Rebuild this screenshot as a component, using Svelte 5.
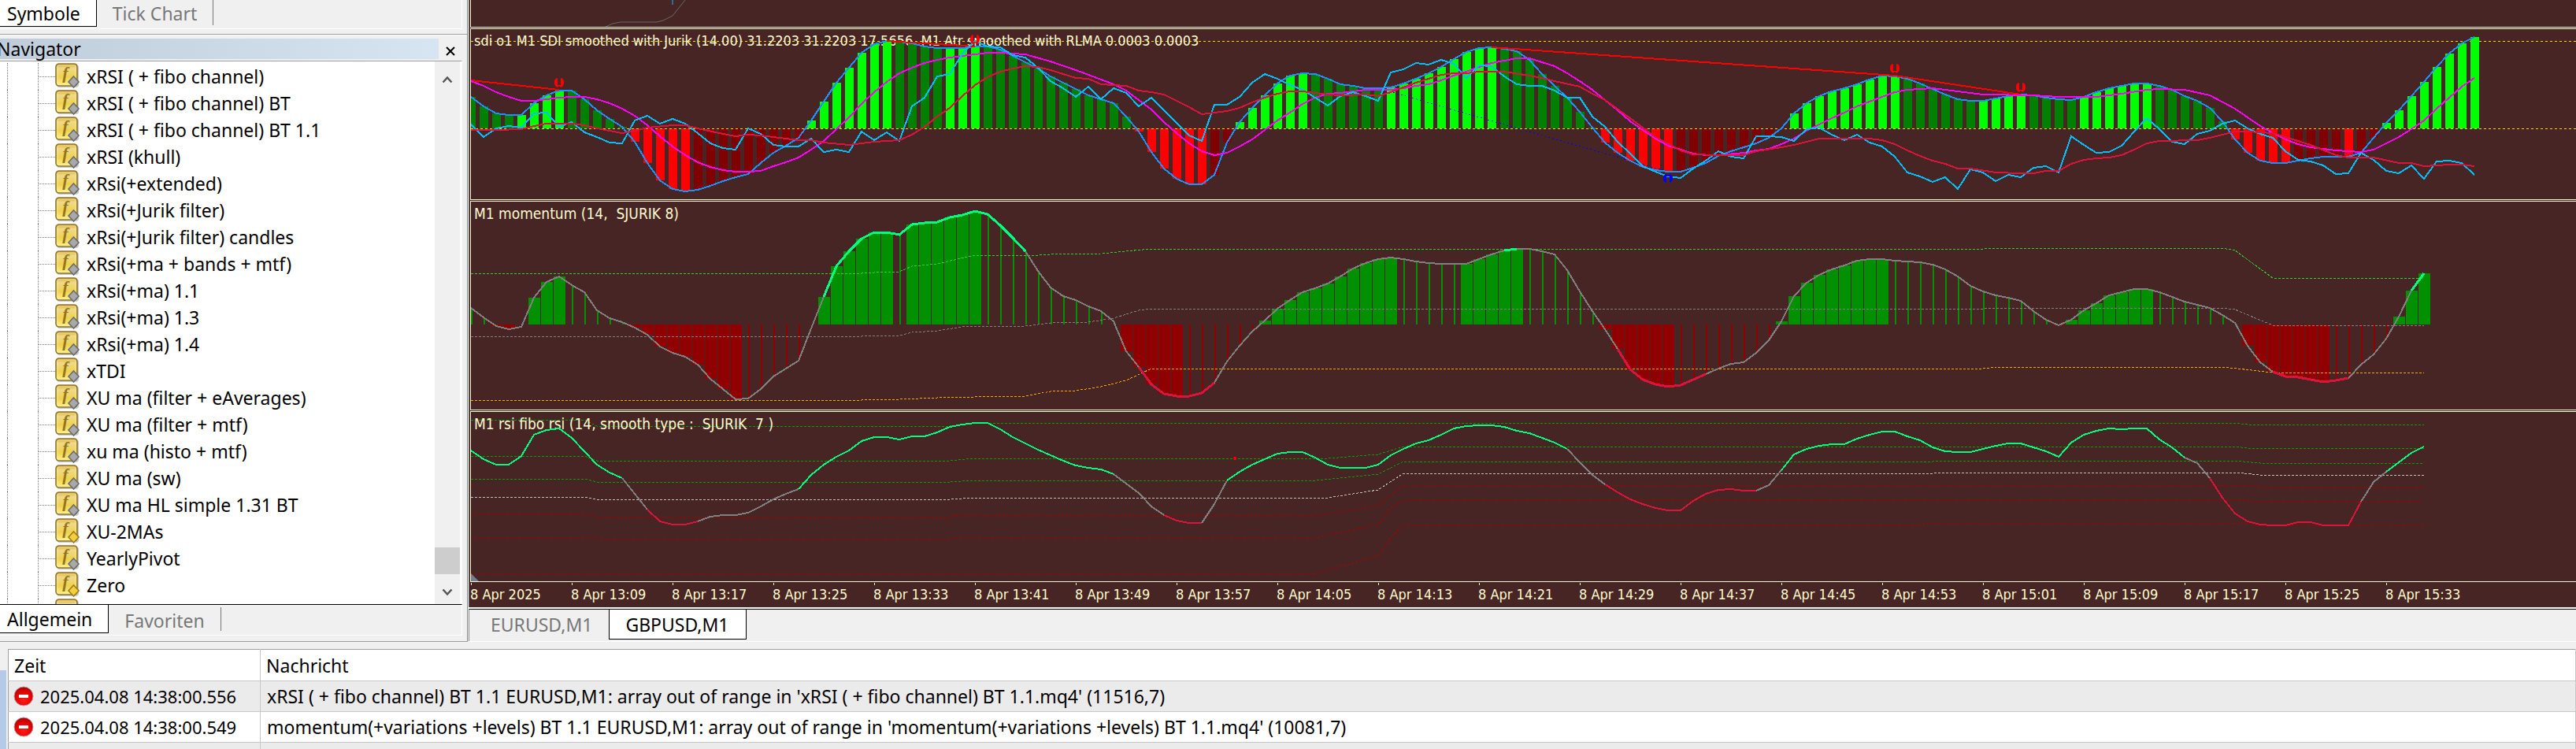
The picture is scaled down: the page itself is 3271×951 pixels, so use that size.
<script>
  const indicators = [
    'xRSI ( + fibo channel)',
    'xRSI ( + fibo channel) BT',
    'xRSI ( + fibo channel) BT 1.1',
    'xRSI (khull)',
    'xRsi(+extended)',
    'xRsi(+Jurik filter)',
    'xRsi(+Jurik filter) candles',
    'xRsi(+ma + bands + mtf)',
    'xRsi(+ma) 1.1',
    'xRsi(+ma) 1.3',
    'xRsi(+ma) 1.4',
    'xTDI',
    'XU ma (filter + eAverages)',
    'XU ma (filter + mtf)',
    'xu ma (histo + mtf)',
    'XU ma (sw)',
    'XU ma HL simple 1.31 BT',
    'XU-2MAs',
    'YearlyPivot',
    'Zero',
    ''
  ];
  const compiledOnly = ['XU-2MAs', 'Zero'];

  const messages = [
    { time: '2025.04.08 14:38:00.556', text: "xRSI ( + fibo channel) BT 1.1 EURUSD,M1: array out of range in 'xRSI ( + fibo channel) BT 1.1.mq4' (11516,7)" },
    { time: '2025.04.08 14:38:00.549', text: "momentum(+variations +levels) BT 1.1 EURUSD,M1: array out of range in 'momentum(+variations +levels) BT 1.1.mq4' (10081,7)" }
  ];

  const times = ['2025', '13:09', '13:17', '13:25', '13:33', '13:41', '13:49', '13:57', '14:05', '14:13', '14:21', '14:29', '14:37', '14:45', '14:53', '15:01', '15:09', '15:17', '15:25', '15:33'];

  // distance between two candles
  const STEP = 16;

  // full series: one value for each candle
  const line = (ys, from = 0, to = ys.length - 1) =>
    ys.slice(from, to + 1).map((y, i) => `${(from + i) * STEP},${y}`).join(' ');

  // sparse series: "candle,value" pairs
  const path = (s) =>
    s.split(' ').map((p) => p.split(',')).map(([k, y]) => `${k * STEP},${y}`).join(' ');

  const inside = (k, ranges) => ranges.some(([a, b]) => k >= a && k <= b);

  // --- SDI ---
  const sdi = [
    123, 135, 144, 146, 146, 131, 121, 115, 115, 126, 140, 151, 161, 180, 207, 229, 240, 243, 241, 236,
    230, 225, 221, 207, 194, 185, 175, 153, 129, 105, 86, 67, 56, 52, 53, 55, 59, 61, 61, 61,
    59, 59, 63, 71, 79, 87, 97, 105, 113, 121, 126, 131, 148, 167, 193, 214, 227, 234, 234, 222,
    181, 155, 137, 121, 106, 96, 93, 94, 100, 107, 109, 112, 112, 111, 106, 100, 93, 85, 75, 66,
    61, 60, 62, 65, 76, 94, 109, 124, 142, 162, 181, 194, 204, 212, 216, 218, 218, 213, 207, 198,
    192, 187, 182, 175, 163, 144, 131, 122, 116, 112, 107, 101, 96, 97, 100, 106, 113, 120, 126, 128,
    128, 125, 122, 120, 121, 124, 126, 127, 123, 117, 112, 109, 106, 106, 109, 114, 122, 128, 137, 154,
    177, 194, 204, 207, 207, 204, 201, 199, 199, 199, 194, 175, 156, 140, 122, 104, 85, 68, 55, 47
  ];
  const atr = [
    158, 174, 163, 160, 162, 144, 143, 161, 155, 168, 174, 181, 182, 153, 147, 157, 151, 157, 169, 182,
    188, 190, 163, 170, 184, 186, 186, 176, 193, 190, 193, 167, 178, 168, 179, 135, 124, 97, 94, 68,
    52, 59, 60, 70, 73, 86, 103, 112, 123, 110, 126, 112, 118, 135, 124, 140, 156, 172, 179, 133,
    133, 123, 105, 94, 100, 108, 114, 124, 134, 122, 117, 122, 128, 92, 88, 80, 82, 76, 81, 99,
    83, 84, 97, 107, 109, 109, 115, 124, 124, 148, 161, 180, 195, 211, 218, 224, 226, 214, 204, 192,
    199, 201, 173, 173, 174, 179, 164, 162, 171, 178, 171, 181, 186, 199, 219, 224, 231, 225, 240, 215,
    219, 230, 222, 225, 213, 211, 219, 173, 184, 194, 193, 185, 167, 150, 164, 180, 183, 170, 166, 157,
    153, 163, 170, 175, 192, 203, 205, 210, 221, 220, 194, 203, 217, 220, 210, 227, 205, 204, 207, 222
  ];
  const signal = '0,103 1,109 2,117 3,123 4,128 5,128 6,126 7,124 8,123 9,123 10,126 11,131 12,138 13,147 14,159 15,173 16,186 17,197 18,206 19,212 20,216 21,218 22,218 23,217 24,211 25,206 26,200 27,190 28,179 29,164 30,149 31,132 32,117 33,104 34,93 35,86 36,80 37,76 38,73 39,71 40,69 41,67 42,67 43,68 44,69 46,78 48,89 50,101 51,107 52,115 53,127 54,139 55,155 56,169 57,182 58,192 59,197 60,194 61,186 62,177 63,165 64,153 65,143 66,132 67,124 68,119 69,118 70,116 71,114 73,114 74,112 75,109 76,107 77,102 78,96 79,91 80,85 81,80 82,77 83,74 84,74 85,79 86,84 87,93 88,103 89,114 90,127 91,140 92,154 93,165 94,176 95,185 96,190 97,195 98,197 99,197 101,194 102,191 103,189 104,183 105,176 106,166 107,158 108,150 109,143 110,135 111,129 112,123 113,117 114,114 116,112 118,116 120,120 124,121 126,123 129,123 131,119 133,114 134,113 136,114 138,121 140,138 141,149 142,160 143,169 144,177 145,183 146,187 148,191 150,193 151,190 152,182 153,174 154,164 155,153 156,138 157,124 158,110 159,99';
  const rlma = '0,165 2,165 4,164 5,160 6,157 8,157 9,159 10,163 11,166 12,169 13,166 14,162 16,159 17,159 18,163 20,170 21,173 22,171 23,172 24,174 26,178 27,178 28,181 30,184 32,180 34,178 35,171 36,161 37,148 38,137 39,122 40,108 41,98 42,91 43,87 44,84 45,85 46,89 48,99 49,100 50,107 52,109 53,115 54,117 55,120 56,128 57,136 58,145 59,143 60,141 61,137 62,130 63,124 64,119 65,116 66,116 67,118 68,120 69,121 71,120 72,122 73,117 75,105 77,95 78,93 79,93 80,91 82,91 84,96 85,99 86,103 88,110 89,119 90,127 92,150 94,174 96,191 97,196 99,197 101,197 102,192 104,187 105,184 107,176 111,176 112,178 113,183 114,191 115,198 116,204 117,208 118,214 119,214 121,219 123,220 124,220 125,217 126,217 127,208 128,203 129,201 130,200 131,197 132,190 133,182 134,179 137,178 138,175 140,167 141,167 143,169 144,174 146,184 148,197 149,200 151,200 153,207 154,207 155,211 157,209 158,209 159,211';
  const strong = [[4, 7], [13, 17], [27, 33], [38, 40], [53, 58], [61, 66], [73, 81], [90, 95], [105, 113], [120, 123], [128, 133], [140, 144], [149, 149], [152, 159]];
  const divergences = ['0,102 7,114', '33,52 40,59', '81,60 113,96 123,120'];
  const marks = [[7, 105], [40, 50], [113, 87], [123, 111]];

  function sdiColor(k, y) {
    if (y < 163) return inside(k, strong) ? '#00ff00' : '#008000';
    return inside(k, strong) ? '#ff0000' : '#800000';
  }

  // --- momentum ---
  const momentum = [
    391, 403, 414, 418, 415, 378, 358, 351, 362, 371, 394, 404, 409, 416, 425, 440, 448, 453, 463, 481,
    494, 507, 506, 494, 478, 468, 458, 417, 377, 338, 319, 303, 295, 295, 298, 285, 283, 282, 276, 273,
    268, 272, 286, 302, 319, 344, 365, 376, 381, 389, 395, 408, 446, 466, 488, 500, 503, 503, 499, 486,
    459, 439, 421, 407, 392, 381, 371, 366, 360, 351, 341, 334, 329, 327, 329, 332, 334, 335, 335, 335,
    329, 323, 318, 316, 316, 319, 323, 343, 370, 395, 418, 443, 469, 482, 488, 491, 489, 482, 475, 468,
    462, 460, 448, 432, 408, 376, 359, 349, 342, 337, 331, 329, 329, 331, 332, 333, 336, 342, 351, 363,
    370, 375, 378, 382, 395, 406, 413, 406, 394, 385, 375, 371, 367, 367, 371, 377, 383, 387, 391, 400,
    410, 439, 460, 472, 478, 479, 482, 485, 483, 480, 463, 450, 430, 402, 369, 347
  ];
  const wide = [[2, 3], [5, 7], [13, 21], [28, 33], [35, 40], [52, 56], [63, 73], [79, 83], [90, 95], [104, 112], [126, 133], [141, 147], [153, 155]];
  const momentumHot = [[28, 44, '#00ff7f'], [82, 83, '#00ff7f'], [154, 155, '#00ff7f'], [53, 59, '#dc143c'], [91, 98, '#dc143c'], [143, 149, '#dc143c']];
  const momentumLevels = [
    { color: '#32cd32', d: '0,347 31,347 32,346 34,345 35,338 37,335 40,324 45,324 46,323 50,322 52,319 54,316 120,316 121,315 139,315 140,318 143,353 155,353' },
    { color: '#808080', d: '0,427 31,427 32,426 34,426 35,422 37,420 39,415 44,414 46,410 49,409 51,404 53,394 54,392 120,392 121,391 139,391 140,393 143,413 155,413' },
    { color: '#ffa500', d: '0,508 31,508 32,507 34,507 37,505 40,504 44,503 46,497 48,496 50,491 52,483 54,468 120,468 121,466 139,466 143,473 155,473' }
  ];

  // --- rsi ---
  const rsi = [
    572, 583, 590, 590, 579, 552, 546, 544, 556, 573, 590, 600, 607, 627, 647, 662, 666, 666, 662, 656,
    654, 654, 651, 643, 634, 627, 621, 603, 590, 580, 572, 560, 555, 555, 558, 554, 554, 549, 542, 539,
    537, 537, 545, 555, 563, 571, 578, 585, 591, 594, 596, 602, 614, 626, 643, 654, 661, 664, 664, 640,
    610, 599, 590, 583, 576, 574, 574, 581, 590, 594, 594, 594, 590, 578, 570, 563, 559, 552, 544, 541,
    540, 540, 542, 547, 550, 556, 562, 570, 587, 603, 615, 625, 634, 640, 645, 648, 648, 636, 627, 622,
    621, 623, 623, 616, 597, 577, 570, 566, 564, 564, 557, 552, 548, 548, 554, 559, 568, 573, 574, 574,
    570, 566, 563, 563, 568, 573, 580, 562, 552, 547, 544, 545, 544, 544, 558, 568, 581, 588, 607, 632,
    652, 662, 666, 667, 667, 663, 663, 667, 667, 667, 637, 612, 599, 587, 575, 567
  ];
  const rsiParts = [
    [0, 12, '#00ff7f'], [12, 14, '#808080'], [14, 18, '#dc143c'], [18, 26, '#808080'], [26, 51, '#00ff7f'],
    [51, 55, '#808080'], [55, 58, '#dc143c'], [58, 60, '#808080'], [60, 87, '#00ff7f'], [87, 90, '#808080'],
    [90, 102, '#dc143c'], [102, 104, '#808080'], [104, 136, '#00ff7f'], [136, 138, '#808080'], [138, 150, '#dc143c'],
    [150, 152, '#808080'], [152, 155, '#00ff7f']
  ];
  const rsiLevels = [
    { color: '#00a000', d: '0,533 9,533 10,541 38,541 40,537 140,537 141,539 155,539' },
    { color: '#00a000', d: '0,579 9,579 10,585 38,585 40,582 68,582 72,577 74,567 140,567 141,569 155,569' },
    { color: '#00a000', d: '0,608 9,608 10,612 38,612 40,610 67,610 72,602 74,586 116,586 117,585 140,585 142,588 155,588' },
    { color: '#c0c0c0', d: '0,631 9,631 10,634 38,634 40,632 68,632 72,622 74,601 116,601 117,600 140,600 142,603 155,603' },
    { color: '#a00000', d: '0,653 9,653 10,656 38,656 40,655 67,655 72,642 74,616 140,616 142,618 155,618' },
    { color: '#a00000', d: '0,682 9,682 10,684 38,684 40,683 67,683 72,666 73,645 74,635 140,634 142,637 155,637' },
    { color: '#a00000', d: '0,728 67,728 72,706 73,683 74,666 115,666 116,664 140,664 142,667 155,667' }
  ];
</script>

<div class="terminal">
  <div class="workspace">
    <aside class="side">
      <div class="tabs market">
        <button class="tab active">Symbole</button>
        <button class="tab">Tick Chart</button>
      </div>

      <section class="navigator">
        <header>
          <h2>Navigator</h2>
          <button class="close" aria-label="Close">
            <svg width="12" height="12" viewBox="0 0 12 12"><path d="M1 1l10 10M11 1L1 11" stroke="#000" stroke-width="2" /></svg>
          </button>
        </header>
        <div class="body">
          <ul>
            {#each indicators as name}
              <li>
                <span class="guide first"></span>
                <span class="guide"></span>
                <span class="branch"></span>
                <svg class="icon" width="32" height="32" viewBox="0 0 32 32">
                  <rect x="2" y="2" width="28" height="29" rx="4" fill="#c9c9c9" />
                  <rect x="1" y="1" width="27" height="28" rx="4" fill="url(#gold)" stroke="#8c7434" stroke-width="1.6" />
                  <rect x="3" y="3" width="23" height="24" rx="2" fill="none" stroke="#fff3a0" stroke-opacity=".6" />
                  {#if name}
                    <text x="13" y="20" text-anchor="middle" class="fx">f</text>
                  {/if}
                  <path d="M23.500 17l6.500 7-6.500 7-6.500-7z" fill={compiledOnly.includes(name) ? '#f3cf45' : '#a9a9a9'} stroke={compiledOnly.includes(name) ? '#a07c14' : '#6c6c6c'} stroke-width="1.600" />
                </svg>
                <span class="name">{name}</span>
              </li>
            {/each}
          </ul>
          <div class="scroll">
            <button aria-label="Scroll up">
              <svg width="14" height="10" viewBox="0 0 14 10"><path d="M1.500 8.500L7 2.500l5.500 6" fill="none" stroke="#555" stroke-width="2.500" /></svg>
            </button>
            <span class="thumb"></span>
            <button aria-label="Scroll down">
              <svg width="14" height="10" viewBox="0 0 14 10"><path d="M1.500 1.500L7 7.500l5.500-6" fill="none" stroke="#555" stroke-width="2.500" /></svg>
            </button>
          </div>
        </div>
        <div class="tabs bottom">
          <button class="tab active">Allgemein</button>
          <button class="tab">Favoriten</button>
        </div>
      </section>
    </aside>

    <main>
      <div class="charts">
        <div class="pane price">
          <svg>
            <path d="M171 34l9-4 10-2h46l8-2 12-6 16-20" fill="none" stroke="#696969" />
            <path d="M256 0v6" stroke="#00bfff" />
          </svg>
        </div>

        <div class="pane sdi">
          <svg>
            <g transform="translate(0 -37)">
              <line x1="0" x2="100%" y1="52.500" y2="52.500" class="gold" />
              <text x="4" y="58">{'sdi o1 M1 SDI smoothed with Jurik (14.00) 31.2203 31.2203 17.5656  M1 Atr smoothed with RLMA 0.0003 0.0003'}</text>
              {#each sdi as y, k}
                <rect x={k * STEP - 5} y={Math.min(y, 163)} width="11" height={Math.abs(y - 163)} fill={sdiColor(k, y)} />
              {/each}
              <line x1="0" x2="100%" y1="163.500" y2="163.500" class="gold" />
              <polyline points={path('72,112 95,218')} stroke="#0000ff" stroke-dasharray="2 3" />
              <polyline points={line(sdi)} stroke="#1e90ff" stroke-width="2" />
              {#each divergences as d}
                <polyline points={path(d)} stroke="#ff0000" stroke-width="2" />
              {/each}
              <polyline points={path(signal)} stroke="#ff00ff" stroke-width="2" />
              <polyline points={line(atr)} stroke="#00bfff" stroke-width="2" />
              <polyline points={path(rlma)} stroke="#dc143c" stroke-width="2" />
              {#each marks as [k, y]}
                <path transform="translate({k * STEP} {y})" d="M-2-6C-7-6-8 4-2 6L0 4L2 6C8 4 7-6 2-6V3H-2z" fill="#ff0000" />
              {/each}
              <path transform="translate({95 * STEP} 226)" d="M-2 6C-7 5-8-4-2-5L0-3L2-5C8-4 7 5 2 6V-2H-2z" fill="#0000ff" />
            </g>
          </svg>
        </div>

        <div class="pane momentum">
          <svg>
            <g transform="translate(0 -256)">
              <text x="4" y="278">{'M1 momentum (14,  SJURIK 8)'}</text>
              {#each momentum as y, k}
                <rect x={inside(k, wide) ? k * STEP - 7 : k * STEP} y={Math.min(y, 412)} width={inside(k, wide) ? 15 : 2} height={Math.abs(y - 412)} fill={y < 412 ? '#009000' : '#900000'} />
              {/each}
              {#each momentumLevels as l}
                <polyline points={path(l.d)} stroke={l.color} class="dots" />
              {/each}
              <polyline points={line(momentum)} stroke="#808080" stroke-width="2" />
              {#each momentumHot as [a, b, color]}
                <polyline points={line(momentum, a, b)} stroke={color} stroke-width="3" />
              {/each}
            </g>
          </svg>
        </div>

        <div class="pane rsi">
          <svg>
            <g transform="translate(0 -523)">
              {#each rsiLevels as l}
                <polyline points={path(l.d)} stroke={l.color} class="dots" />
              {/each}
              <text x="4" y="545">{'M1 rsi fibo rsi (14, smooth type :  SJURIK  7 )'}</text>
              {#each rsiParts as [a, b, color]}
                <polyline points={line(rsi, a, b)} stroke={color} stroke-width="2" />
              {/each}
              <path d="M970 580v4" stroke="#ff0000" stroke-width="3" />
              <path d="M0 728v10h10z" fill="#708090" />
            </g>
          </svg>
        </div>

        <div class="axis">
          {#each times as t}
            <span>8 Apr {t}</span>
          {/each}
        </div>
      </div>

      <div class="tabs windows">
        <button class="tab">EURUSD,M1</button>
        <button class="tab active">GBPUSD,M1</button>
      </div>
    </main>
  </div>

  <section class="toolbox">
    <div class="grip"></div>
    <table>
      <thead>
        <tr><th class="time">Zeit</th><th>Nachricht</th></tr>
      </thead>
      <tbody>
        {#each messages as m}
          <tr>
            <td>
              <div class="stamp">
                <svg width="26" height="26" viewBox="0 0 26 26">
                  <circle cx="13" cy="13" r="12" fill="url(#alert)" stroke="#b4a0a0" />
                  <rect x="7" y="11" width="12" height="4" fill="#fff" />
                </svg>
                {m.time}
              </div>
            </td>
            <td>{m.text}</td>
          </tr>
        {/each}
        <tr><td></td><td></td></tr>
      </tbody>
    </table>
  </section>

  <svg class="defs" width="0" height="0">
    <defs>
      <linearGradient id="gold" x1="0" y1="0" x2="0" y2="1">
        <stop offset="0" stop-color="#d9a92c" />
        <stop offset=".2" stop-color="#efd98a" />
        <stop offset=".6" stop-color="#efd24e" />
        <stop offset="1" stop-color="#fdf08a" />
      </linearGradient>
      <radialGradient id="alert" cx=".5" cy=".7" r=".7">
        <stop offset="0" stop-color="#ff1a1a" />
        <stop offset=".6" stop-color="#e80000" />
        <stop offset="1" stop-color="#a80000" />
      </radialGradient>
    </defs>
  </svg>
</div>

<style>
:global(body) {
  background: #f0f0f0;
}

.terminal {
  display: flex;
  flex-direction: column;
  height: 100vh;
  overflow: hidden;
  background: #f0f0f0;
  color: #000;
  font-family: "Noto Sans", sans-serif;
  font-size: 23px;
  line-height: 34px;
}

.defs {
  position: absolute;
}

button {
  margin: 0;
  padding: 0;
  border: none;
  background: none;
  font: inherit;
  color: inherit;
}

.workspace {
  display: flex;
  flex: none;
}

.side {
  flex: none;
  width: 594px;
  box-sizing: border-box;
  border-right: 1px solid #8c8c8c;
  border-bottom: 1px solid #a0a0a0;
}

.tabs {
  display: flex;
  align-items: flex-start;
}

.tab {
  color: #777;
}

.tab.active {
  background: #fff;
  color: #000;
  border-right: 1px solid #000;
  border-bottom: 1px solid #000;
}

.market {
  height: 36px;
  margin-right: 6px;
  border-right: 1px solid #fff;
  border-bottom: 1px solid #fff;
}

.market .tab {
  height: 32px;
  padding: 0 20px;
  border-right: 1px solid #777;
}

.market .tab.active {
  height: 34px;
  padding: 0 20px 0 9px;
  border-right-color: #000;
}

.navigator {
  margin-top: 6px;
  border-top: 1px solid #a0a0a0;
  box-shadow: inset 0 1px #fff;
  padding: 5px 6px 6px 0;
}

header {
  display: flex;
  align-items: center;
  height: 26px;
}

h2 {
  flex: 1;
  height: 26px;
  margin: 0;
  text-indent: -4px;
  font-size: 23px;
  font-weight: 400;
  line-height: 26px;
  background: linear-gradient(90deg, #bfcddb, #d7e4f2);
}

.close {
  width: 30px;
  line-height: 1;
}

.body {
  display: flex;
  height: 689px;
  margin-top: 2px;
  border-top: 1px solid #a0a0a0;
  border-right: 1px solid #fff;
  background: #fff;
  overflow: hidden;
}

ul {
  flex: 1;
  margin: 0;
  padding: 2px 0 0;
  list-style: none;
}

li {
  display: flex;
  align-items: center;
  height: 34px;
}

.guide {
  width: 38px;
  height: 34px;
  border-right: 1px dotted #808080;
}

.guide.first {
  width: 9px;
}

.branch {
  width: 21px;
  border-bottom: 1px dotted #808080;
}

.icon {
  flex: none;
  margin-bottom: 2px;
}

.fx {
  font: italic bold 22px "Liberation Serif", serif;
  fill: #94751e;
}

.name {
  margin-left: 8px;
}

.scroll {
  display: flex;
  flex-direction: column;
  justify-content: flex-end;
  width: 32px;
  margin-right: 2px;
  background: #f0f0f0;
}

.scroll button {
  height: 38px;
  line-height: 1;
}

.scroll button:first-child {
  margin-bottom: auto;
}

.thumb {
  height: 34px;
  background: #cdcdcd;
}

.bottom {
  height: 38px;
  border-top: 1px solid #000;
  border-right: 1px solid #fff;
  border-bottom: 1px solid #fff;
}

.bottom .tab {
  height: 30px;
  margin-top: 3px;
  padding: 0 20px;
  border-right: 1px solid #777;
}

.bottom .tab.active {
  height: 36px;
  margin-top: 0;
  padding: 0 20px 0 9px;
  border-right-color: #000;
}

main {
  flex: 1;
  min-width: 0;
  margin-left: 1px;
  border-bottom: 1px solid #fff;
}

.charts {
  display: flex;
  flex-direction: column;
  gap: 1px;
  border-left: 1px solid #696969;
  padding-left: 1px;
  background: #482525;
}

.pane {
  border: 1px solid #fffacd;
  border-right: none;
}

.pane svg {
  display: block;
  width: 100%;
  height: 100%;
  overflow: hidden;
}

.price {
  height: 34px;
  border-top: none;
}

.sdi {
  height: 216px;
}

.momentum {
  height: 264px;
}

.rsi {
  height: 215px;
}

.pane text {
  font: 19px "DejaVu Sans Condensed", "DejaVu Sans", sans-serif;
  fill: #fffacd;
  white-space: pre;
}

.sdi text {
  font-size: 18px;
}

polyline, line {
  fill: none;
  shape-rendering: crispEdges;
}

.gold {
  stroke: #ffd700;
  stroke-dasharray: 3 3;
}

.dots {
  stroke-dasharray: 3 2;
}

.axis {
  display: flex;
  height: 31px;
  overflow: hidden;
  color: #fffacd;
  font: 18px "DejaVu Sans Condensed", "DejaVu Sans", sans-serif;
}

.axis span {
  flex: none;
  width: 128px;
  line-height: 24px;
  white-space: nowrap;
}

.axis span::before {
  content: '';
  display: block;
  width: 1px;
  height: 3px;
  margin-left: 1px;
  background: #fffacd;
}

.windows {
  border-top: 1px solid #000;
  border-left: 1px solid #8c8c8c;
  box-shadow: 0 -2px #fff;
  margin-top: 2px;
  height: 40px;
}

.windows .tab {
  height: 38px;
  padding: 0 21px 0 27px;
}

.windows .tab.active {
  padding: 0 21px 0 20px;
  border-left: 1px solid #000;
}

.toolbox {
  display: flex;
  flex: 1;
  min-height: 0;
  overflow: hidden;
  padding-top: 9px;
}

.grip {
  width: 8px;
  margin: 27px 2px 0 0;
  background: #b5cae6;
}

table {
  flex: 1;
  align-self: flex-start;
  table-layout: fixed;
  border-collapse: collapse;
  border-top: 1px solid #a0a0a0;
  border-left: 1px solid #a0a0a0;
  background: #fff;
}

th, td {
  box-sizing: border-box;
  height: 39px;
  padding: 0 8px;
  border-right: 1px solid #c8c8c8;
  border-bottom: 1px solid #c8c8c8;
  font-weight: 400;
  text-align: left;
  white-space: nowrap;
}

th {
  height: 40px;
  padding-left: 7px;
}

.time {
  width: 320px;
}

tbody tr:nth-child(odd) {
  background: #ebebeb;
}

.stamp {
  display: flex;
  align-items: center;
  gap: 8px;
  margin-left: -2px;
  font-size: 22px;
}
</style>
